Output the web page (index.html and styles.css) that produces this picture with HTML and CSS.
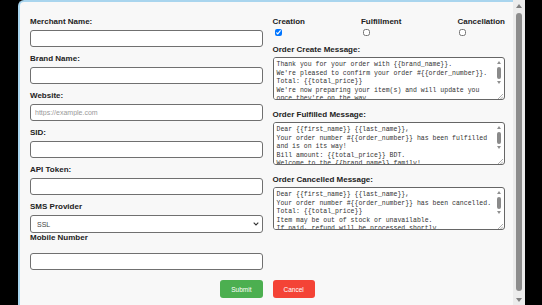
FILE: index.html
```html
<!DOCTYPE html>
<html lang="en">
<head>
    <meta charset="UTF-8">
    <meta name="viewport" content="width=device-width, initial-scale=1">
    <title>Merchant Settings</title>
    <link rel="stylesheet" href="styles.css">
</head>
<body>
    <div class="modal">
        <div class="modal-content">
            <form class="merchant-form" id="merchantForm">
                <div class="columns">

                    <!-- Datos del comercio -->
                    <div class="column">
                        <div class="form-group">
                            <label for="merchantName">Merchant Name:</label>
                            <input type="text" id="merchantName" name="merchantName">
                        </div>
                        <div class="form-group">
                            <label for="brandName">Brand Name:</label>
                            <input type="text" id="brandName" name="brandName">
                        </div>
                        <div class="form-group">
                            <label for="website">Website:</label>
                            <input type="text" id="website" name="website" placeholder="https://example.com">
                        </div>
                        <div class="form-group">
                            <label for="sid">SID:</label>
                            <input type="text" id="sid" name="sid">
                        </div>
                        <div class="form-group">
                            <label for="apiToken">API Token:</label>
                            <input type="text" id="apiToken" name="apiToken">
                        </div>
                        <div class="form-group form-group-tight">
                            <label for="smsProvider">SMS Provider</label>
                            <div class="select-wrap">
                                <select id="smsProvider" name="smsProvider">
                                    <option value="ssl">SSL</option>
                                    <option value="other">Other</option>
                                </select>
                                <svg class="select-arrow" width="6" height="4" viewBox="0 0 6 4">
                                    <path d="M0.7 0.7 L3 3 L5.3 0.7" fill="none" stroke="#333" stroke-width="1.1"/>
                                </svg>
                            </div>
                        </div>
                        <div class="form-group">
                            <label for="mobileNumber" class="label-spaced">Mobile Number</label>
                            <input type="text" id="mobileNumber" name="mobileNumber">
                        </div>
                    </div>

                    <!-- Mensajes SMS -->
                    <div class="column">
                        <div class="notify-options">
                            <label class="option">Creation<input type="checkbox" name="onCreate" checked></label>
                            <label class="option">Fulfillment<input type="checkbox" name="onFulfill"></label>
                            <label class="option">Cancellation<input type="checkbox" name="onCancel"></label>
                        </div>
                        <div class="message-group">
                            <label for="createMessage">Order Create Message:</label>
                            <div class="textarea-box">
                                <textarea id="createMessage" name="createMessage" spellcheck="false">Thank you for your order with {{brand_name}}.
We're pleased to confirm your order #{{order_number}}.
Total: {{total_price}}
We're now preparing your item(s) and will update you once they're on the way.
Thank you for shopping with us!</textarea>
                                <div class="mini-scrollbar">
                                    <span class="arrow-up"></span>
                                    <span class="mini-thumb"></span>
                                    <span class="arrow-down"></span>
                                    <svg class="grip" width="6" height="6" viewBox="0 0 6 6">
                                        <path d="M1 6 L6 1 M3.5 6 L6 3.5" stroke="#999" stroke-width="0.8"/>
                                    </svg>
                                </div>
                            </div>
                        </div>
                        <div class="message-group">
                            <label for="fulfillMessage">Order Fulfilled Message:</label>
                            <div class="textarea-box">
                                <textarea id="fulfillMessage" name="fulfillMessage" spellcheck="false">Dear {{first_name}} {{last_name}},
Your order number #{{order_number}} has been fulfilled and is on its way!
Bill amount: {{total_price}} BDT.
Welcome to the {{brand_name}} family!
Thank you for shopping with us.</textarea>
                                <div class="mini-scrollbar">
                                    <span class="arrow-up"></span>
                                    <span class="mini-thumb"></span>
                                    <span class="arrow-down"></span>
                                    <svg class="grip" width="6" height="6" viewBox="0 0 6 6">
                                        <path d="M1 6 L6 1 M3.5 6 L6 3.5" stroke="#999" stroke-width="0.8"/>
                                    </svg>
                                </div>
                            </div>
                        </div>
                        <div class="message-group">
                            <label for="cancelMessage">Order Cancelled Message:</label>
                            <div class="textarea-box">
                                <textarea id="cancelMessage" name="cancelMessage" spellcheck="false">Dear {{first_name}} {{last_name}},
Your order number #{{order_number}} has been cancelled.
Total: {{total_price}}
Item may be out of stock or unavailable.
If paid, refund will be processed shortly.
Sorry for the inconvenience.</textarea>
                                <div class="mini-scrollbar">
                                    <span class="arrow-up"></span>
                                    <span class="mini-thumb"></span>
                                    <span class="arrow-down"></span>
                                    <svg class="grip" width="6" height="6" viewBox="0 0 6 6">
                                        <path d="M1 6 L6 1 M3.5 6 L6 3.5" stroke="#999" stroke-width="0.8"/>
                                    </svg>
                                </div>
                            </div>
                        </div>
                    </div>
                </div>

                <div class="actions">
                    <button type="submit" class="btn-submit">Submit</button>
                    <button type="button" class="btn-cancel">Cancel</button>
                </div>
            </form>
        </div>

        <div class="scrollbar">
            <span class="scroll-up"></span>
            <span class="scroll-thumb"></span>
            <span class="scroll-down"></span>
        </div>
    </div>
</body>
</html>
```

FILE: styles.css
```css
body {
    font-family: "Liberation Sans", Arial, sans-serif;
    background-color: #000;
    margin: 0;
    padding: 0 0 0 18px;
    height: 305px;
    overflow: hidden;
}
.modal {
    display: flex;
    width: 507px;
    height: 305px;
    overflow: hidden;
}
.modal-content {
    flex: 1;
    min-width: 0;
    background-color: #f8f8f8;
    border-top: 2px solid #a9d5ee;
    border-left: 2px solid #a9d5ee;
    border-top-left-radius: 6px;
    padding: 15px 8px 11px 10px;
}

/* barra de desplazamiento del modal */
.scrollbar {
    width: 12px;
    flex-shrink: 0;
    background-color: #ececec;
    display: flex;
    flex-direction: column;
    align-items: center;
    padding: 4px 0 3px;
    box-sizing: border-box;
}
.scroll-up {
    border-left: 3px solid transparent;
    border-right: 3px solid transparent;
    border-bottom: 4px solid #808080;
}
.scroll-down {
    border-left: 3px solid transparent;
    border-right: 3px solid transparent;
    border-top: 4px solid #808080;
}
.scroll-thumb {
    flex: 1;
    width: 6px;
    margin: 5px 0 7px;
    background-color: #8d8d8d;
    border-radius: 3px;
}

.columns {
    display: grid;
    grid-template-columns: 1fr 1fr;
    gap: 10px;
}
.form-group {
    margin-bottom: 7px;
}
.form-group-tight {
    margin-bottom: 0;
}
label {
    display: block;
    font-size: 8px;
    line-height: 10px;
    font-weight: bold;
    color: #222;
    margin-bottom: 3px;
}
.label-spaced {
    margin-bottom: 10px;
}
input[type="text"], select {
    display: block;
    width: 100%;
    height: 17px;
    padding: 0 4px;
    font-family: "Liberation Sans", Arial, sans-serif;
    font-size: 7px;
    color: #444;
    background-color: #fff;
    border: 1px solid #707070;
    border-radius: 3px;
    box-sizing: border-box;
    outline: none;
}
input::placeholder {
    color: #999;
}
.select-wrap {
    position: relative;
}
select {
    appearance: none;
    height: 18px;
    padding-left: 6px;
}
.select-arrow {
    position: absolute;
    right: 4px;
    top: 7px;
}
.notify-options {
    display: flex;
    justify-content: space-between;
    margin-bottom: 9px;
}
.option {
    display: flex;
    flex-direction: column;
    align-items: flex-start;
    margin-bottom: 0;
}
.option input {
    width: 7px;
    height: 7px;
    margin: 2px 0 0 2px;
}
.message-group {
    margin-bottom: 10px;
}
.message-group label {
    margin-bottom: 2px;
}
.textarea-box {
    display: flex;
    height: 43px;
    background-color: #fff;
    border: 1px solid #666;
    border-radius: 3px;
    box-sizing: border-box;
    overflow: hidden;
}
textarea {
    flex: 1;
    min-width: 0;
    padding: 3px 2px 0 3px;
    font-family: "Liberation Mono", "Courier New", monospace;
    font-size: 6.5px;
    line-height: 8.6px;
    color: #333;
    background-color: #fff;
    border: none;
    resize: none;
    overflow: hidden;
    outline: none;
}
.mini-scrollbar {
    width: 8px;
    margin-right: 1px;
    display: flex;
    flex-direction: column;
    align-items: center;
    padding-top: 3px;
}
.arrow-up {
    border-left: 2px solid transparent;
    border-right: 2px solid transparent;
    border-bottom: 3px solid #909090;
}
.arrow-down {
    border-left: 2px solid transparent;
    border-right: 2px solid transparent;
    border-top: 3px solid #909090;
}
.mini-thumb {
    width: 4px;
    height: 12px;
    margin: 3px 0 2px;
    background-color: #8a8a8a;
    border-radius: 2px;
}
.grip {
    margin-top: auto;
    align-self: flex-end;
}
.actions {
    display: flex;
    justify-content: center;
    gap: 10px;
    margin-top: 3px;
}
button {
    height: 18px;
    padding: 0 11px;
    font-family: "Liberation Sans", Arial, sans-serif;
    font-size: 6.5px;
    color: #fff;
    border: none;
    border-radius: 3px;
    cursor: pointer;
}
.btn-submit {
    background-color: #4caf50;
}
.btn-cancel {
    background-color: #f44336;
}
```
